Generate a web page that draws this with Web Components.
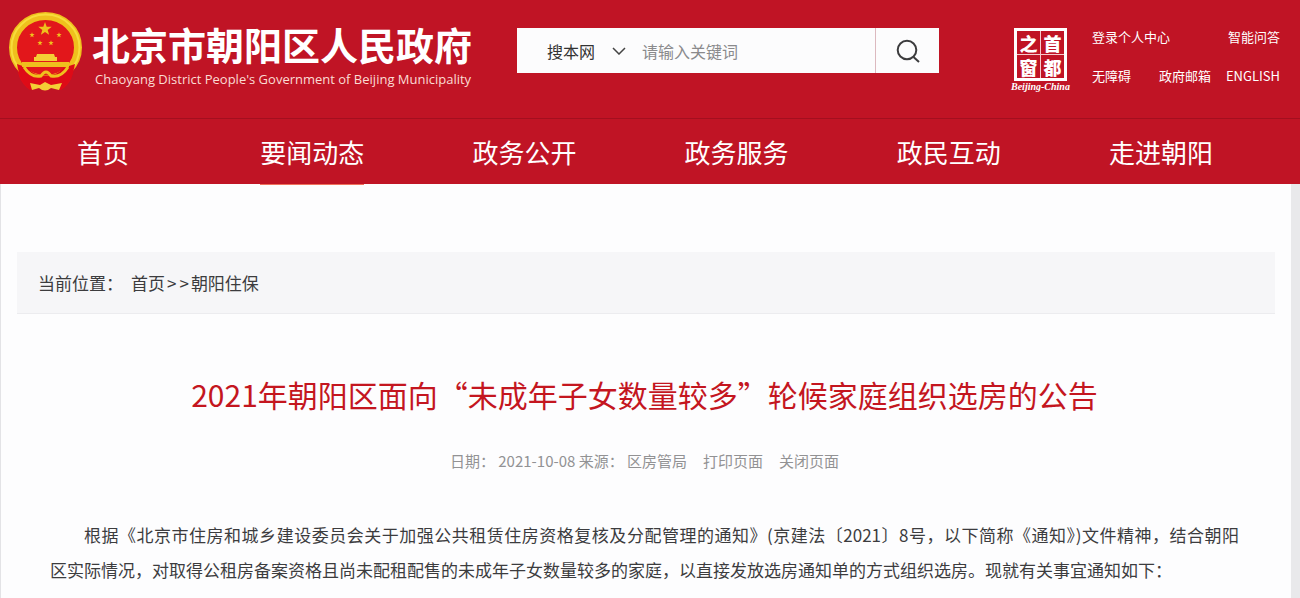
<!DOCTYPE html>
<html lang="zh-CN">
<head>
<meta charset="utf-8">
<meta name="viewport" content="width=device-width, initial-scale=1">
<title>北京市朝阳区人民政府</title>
<style>
	body {
		margin: 0;
		min-height: 100vh;
		display: flex;
		flex-direction: column;
		background: #fdfdfe;
		color: #3c3c3e;
		font-family: "Noto Sans CJK SC", "Liberation Sans", sans-serif;
		--red: #c01425;
	}

	.keep {
		white-space: nowrap;
	}
</style>
</head>
<body>
<site-header>
	<site-brand slot="brand" subtitle="Chaoyang District People's Government of Beijing Municipality">北京市朝阳区人民政府</site-brand>
	<site-search slot="search" placeholder="请输入关键词"></site-search>
	<capital-seal slot="tools" caption="Beijing-China"></capital-seal>
	<quick-links slot="tools">
		<a href="#login">登录个人中心</a>
		<a href="#ask">智能问答</a>
		<a href="#access">无障碍</a>
		<a href="#mail">政府邮箱</a>
		<a href="#english">ENGLISH</a>
	</quick-links>
</site-header>
<site-nav>
	<a href="#home">首页</a>
	<a href="#news" aria-current="true">要闻动态</a>
	<a href="#open">政务公开</a>
	<a href="#service">政务服务</a>
	<a href="#interact">政民互动</a>
	<a href="#about">走进朝阳</a>
</site-nav>
<page-sheet>
	<bread-crumb label="当前位置：">
		<a href="#home">首页</a>
		<a href="#housing">朝阳住保</a>
	</bread-crumb>
	<notice-article>
		<span slot="title">2021年朝阳区面向“未成年子女数量较多”轮候家庭组织选房的公告</span>
		<span slot="meta">日期： 2021-10-08 来源： 区房管局</span>
		<a slot="action" href="#print">打印页面</a>
		<a slot="action" href="#close">关闭页面</a>
		<p>根据《北京市住房和城乡建设委员会关于加强公共租赁住房资格复核及分配管理的通知》(京建法〔2021〕8号，以下简称《通知》)文件精神，结合朝阳<span class="keep">区实际情况</span>，对取得公租房备案资格且尚未配租配售的未成年子女数量较多的家庭，以直接发放选房通知单的方式组织选房。现就有关事宜通知如下：</p>
	</notice-article>
</page-sheet>

<script>
class SiteElement extends HTMLElement {
	constructor() {
		super();
		this.attachShadow({mode: 'open'});
	}

	connectedCallback() {
		this.shadowRoot.innerHTML = this.template;
	}

	get template() {
		return '<slot></slot>';
	}
}

class SiteHeader extends SiteElement {
	get template() {
		return `
			<style>
				:host {
					display: block;
					background: var(--red);
					color: #fff;
				}

				header {
					display: flex;
					align-items: flex-start;
					height: 118px;
					padding: 0 20px 0 8px;
					box-sizing: border-box;
				}

				.search {
					flex: 0 1 422px;
					margin: 28px 0 0 45px;
				}

				.tools {
					display: flex;
					align-items: flex-start;
					gap: 22px;
					margin: 28px 0 0 auto;
				}
			</style>
			<header>
				<slot name="brand"></slot>
				<div class="search"><slot name="search"></slot></div>
				<div class="tools"><slot name="tools"></slot></div>
			</header>
		`;
	}
}

class SiteBrand extends SiteElement {
	get template() {
		return `
			<style>
				:host {
					display: flex;
					flex: none;
					gap: 8px;
					padding-top: 11px;
				}

				svg {
					width: 76px;
					height: 80px;
				}

				.name {
					width: 380px;
				}

				h1 {
					margin: 5px 0 0;
					font-size: 38px;
					line-height: 55px;
					font-weight: 700;
					white-space: nowrap;
				}

				p {
					margin: 0 0 0 3px;
					font: 13px/16px "Open Sans", "Liberation Sans", sans-serif;
					color: #fbdcd4;
					white-space: nowrap;
				}
			</style>
			<svg viewBox="0 0 76 80" aria-hidden="true">
				<defs>
					<path id="star" d="M0-7 1.7-2.3 6.7-2.2 2.7.9 4.1 5.7 0 2.9-4.1 5.7-2.7.9-6.7-2.2-1.7-2.3z"/>
				</defs>
				<path d="M9 52C9 62 12 72 22 79L33 76H43L53 79C63 73 66 63 66 52z" fill="#e30c16"/>
				<ellipse cx="37.500" cy="36.500" rx="32.500" ry="31.500" fill="#e2171b" stroke="#efc01d" stroke-width="8"/>
				<ellipse cx="37.500" cy="36.500" rx="34" ry="33" fill="none" stroke="#f7dc3b" stroke-width="2"/>
				<path d="M9 53 20 57C26 67 49 67 55 57L67 53C65 65 60 74 52 79L43 76H33L23 79C15 73 11 65 9 53z" fill="#de0b17"/>
				<path d="M14 51H61V56H14z" fill="#efc01d"/>
				<path d="M29 43H46L47 46H49V50H26V46H28z" fill="#f4cf35"/>
				<path d="M16 56Q23 67 33 65Q38 57 43 65Q53 67 60 56" fill="none" stroke="#efc01d" stroke-width="3"/>
				<path d="M22 72 32 74 37 71 43 74 54 72 51 79 43 77Q37 82 31 77L24 79z" fill="#f4cf35"/>
				<g fill="#efc01d">
					<use href="#star" transform="translate(37 18)"/>
					<use href="#star" transform="translate(24 24) scale(.4)"/>
					<use href="#star" transform="translate(51 24) scale(.4)"/>
					<use href="#star" transform="translate(32 32) scale(.4)"/>
					<use href="#star" transform="translate(43 32) scale(.4)"/>
				</g>
			</svg>
			<div class="name">
				<h1><slot></slot></h1>
				<p>${this.getAttribute('subtitle')}</p>
			</div>
		`;
	}
}

class SiteSearch extends SiteElement {
	get template() {
		return `
			<style>
				:host {
					display: block;
				}

				form {
					display: flex;
					height: 45px;
					background: #fcfcfd;
				}

				.scope {
					display: grid;
					align-items: center;
					flex: none;
					width: 109px;
				}

				.scope > * {
					grid-area: 1 / 1;
				}

				.scope svg {
					justify-self: end;
					pointer-events: none;
				}

				select, input, button {
					border: 0;
					background: none;
					font: inherit;
					font-size: 16px;
					color: #333;
					box-sizing: border-box;
					height: 45px;
				}

				select {
					appearance: none;
					width: 100%;
					padding: 0 0 0 30px;
				}

				input {
					flex: 1;
					min-width: 0;
					padding: 0 16px;
				}

				input::placeholder {
					color: #8a8a8c;
				}

				button {
					width: 64px;
					padding: 0;
					display: grid;
					place-items: center;
					border-left: 1px solid #dcb9bf;
				}
			</style>
			<form role="search">
				<div class="scope">
					<select aria-label="搜索范围"><option>搜本网</option></select>
					<svg width="14" height="8" viewBox="0 0 14 8" fill="none" stroke="#444" stroke-width="1.500"><path d="M1 1l6 6 6-6"/></svg>
				</div>
				<input type="text" aria-label="关键词" placeholder="${this.getAttribute('placeholder')}">
				<button type="button" aria-label="搜索">
					<svg width="24" height="24" viewBox="0 0 24 24" fill="none" stroke="#3c3c3e" stroke-width="2"><circle cx="11" cy="11" r="9.300"/><path d="M17.500 18 23 23"/></svg>
				</button>
			</form>
		`;
	}
}

class CapitalSeal extends SiteElement {
	get template() {
		const cells = ['之', '首', '窗', '都'].map(c => `<span>${c}</span>`).join('');
		return `
			<style>
				:host {
					display: grid;
					justify-items: center;
				}

				.seal {
					display: grid;
					grid-template-columns: 1fr 1fr;
					gap: 1px;
					width: 53px;
					height: 53px;
					box-sizing: border-box;
					border: 3px solid #fff;
					background: #f6c9cb;
				}

				span {
					display: grid;
					place-items: center;
					background: var(--red);
					font-size: 18px;
					line-height: 22px;
					font-weight: 900;
				}

				small {
					font: italic bold 10px/11px "Liberation Serif", serif;
				}
			</style>
			<div class="seal">${cells}</div>
			<small>${this.getAttribute('caption')}</small>
		`;
	}
}

class QuickLinks extends SiteElement {
	get template() {
		return `
			<style>
				:host {
					display: grid;
					grid-template-columns: 67px 67px auto;
					row-gap: 22px;
				}

				::slotted(a) {
					color: #fff;
					font-size: 13px;
					line-height: 17px;
					text-decoration: none;
					white-space: nowrap;
				}

				::slotted(a:first-child) {
					grid-column: span 2;
				}

				::slotted(a:nth-child(2)) {
					justify-self: end;
				}
			</style>
			<slot></slot>
		`;
	}
}

class SiteNav extends SiteElement {
	get template() {
		return `
			<style>
				:host {
					display: block;
					background: var(--red);
					border-top: 1px solid #a30f1f;
				}

				nav {
					display: grid;
					grid-template-columns: 206fr repeat(5, 212fr);
					justify-items: center;
					padding-right: 33px;
				}

				::slotted(a) {
					color: #fff;
					font-size: 26px;
					line-height: 65px;
					text-decoration: none;
					white-space: nowrap;
				}

				::slotted(a[aria-current]) {
					box-shadow: 0 1px #f0705c;
				}
			</style>
			<nav><slot></slot></nav>
		`;
	}
}

class PageSheet extends SiteElement {
	get template() {
		return `
			<style>
				:host {
					display: block;
					flex: 1;
					border-left: 1px solid #e3e3e6;
					border-right: 9px solid #e9e9eb;
				}

				main {
					padding: 68px 16px 0;
				}
			</style>
			<main><slot></slot></main>
		`;
	}
}

class BreadCrumb extends SiteElement {
	get template() {
		return `
			<style>
				:host {
					display: block;
					background: #f6f6f8;
					border-bottom: 1px solid #ececef;
				}

				nav {
					display: flex;
					padding: 0 21px;
					font-size: 17px;
					line-height: 61px;
				}

				.label {
					margin-right: 8px;
				}

				.sep {
					display: flex;
					gap: 3px;
					padding: 0 2px;
					order: 1;
				}

				::slotted(a) {
					color: inherit;
					text-decoration: none;
				}

				::slotted(a:last-child) {
					order: 2;
				}
			</style>
			<nav>
				<span class="label">${this.getAttribute('label')}</span>
				<slot></slot>
				<span class="sep"><span>&gt;</span><span>&gt;</span></span>
			</nav>
		`;
	}
}

class NoticeArticle extends SiteElement {
	get template() {
		return `
			<style>
				:host {
					display: block;
					padding: 56px 36px 0 33px;
				}

				h2 {
					margin: 0;
					font-size: 30px;
					line-height: 48px;
					font-weight: 400;
					text-align: center;
					color: #c4161f;
				}

				.meta {
					display: flex;
					justify-content: center;
					gap: 16px;
					margin: 32px 0 45px;
					font-size: 15px;
					line-height: 22px;
					color: #929294;
				}

				::slotted(a) {
					color: inherit;
					text-decoration: none;
				}

				::slotted(p) {
					margin: 0;
					font-size: 17px;
					line-height: 35px;
					text-indent: 2em;
					text-align: justify;
				}
			</style>
			<article>
				<h2><slot name="title"></slot></h2>
				<div class="meta"><slot name="meta"></slot><slot name="action"></slot></div>
				<slot></slot>
			</article>
		`;
	}
}

customElements.define('site-header', SiteHeader);
customElements.define('site-brand', SiteBrand);
customElements.define('site-search', SiteSearch);
customElements.define('capital-seal', CapitalSeal);
customElements.define('quick-links', QuickLinks);
customElements.define('site-nav', SiteNav);
customElements.define('page-sheet', PageSheet);
customElements.define('bread-crumb', BreadCrumb);
customElements.define('notice-article', NoticeArticle);
</script>
</body>
</html>
